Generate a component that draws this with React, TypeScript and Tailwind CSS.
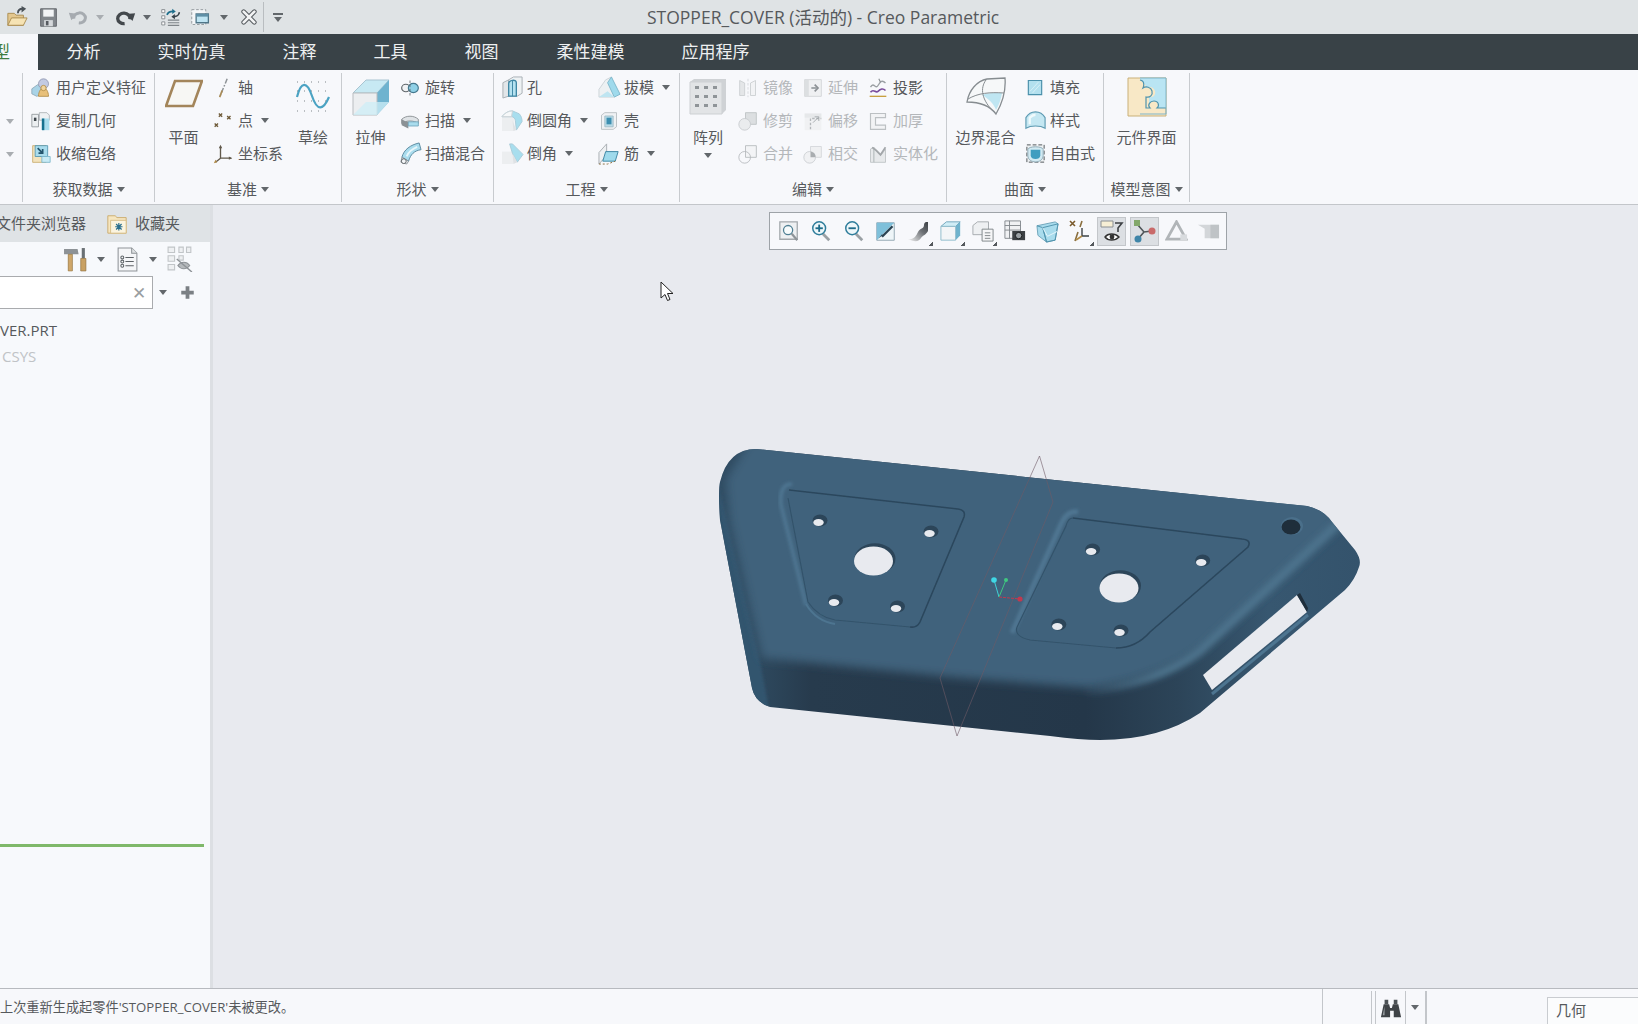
import React from "react";

type IconProps = { size?: number; children: React.ReactNode; box?: number };

function Ic({ size = 20, box = 24, children }: IconProps): React.JSX.Element {
  return (
    <svg viewBox={`0 0 ${box} ${box}`} width={size} height={size} className="shrink-0">
      {children}
    </svg>
  );
}

function Caret({ light = false }: { light?: boolean }): React.JSX.Element {
  return (
    <span
      className={
        light
          ? "inline-block w-0 h-0 border-x-[4px] border-x-transparent border-t-[5px] border-t-[#a9adb1]"
          : "inline-block w-0 h-0 border-x-[4px] border-x-transparent border-t-[5px] border-t-[#62676b]"
      }
    />
  );
}

/* ---------- quick access icons ---------- */
const OpenIcon = () => (
  <Ic size={22}>
    <path d="M2 8h7l2 2h8v11H2z" fill="#e3c78f" stroke="#a98b4f" />
    <path d="M2 21l4-8h17l-4 8z" fill="#f6e3b4" stroke="#a98b4f" />
    <path d="M13 8c0-3 2-5 5-5" fill="none" stroke="#4b5257" strokeWidth="2" />
    <path d="M17 0l5 3-5 4z" fill="#4b5257" />
  </Ic>
);
const SaveIcon = () => (
  <Ic size={21}>
    <path d="M3 2h18v20H3z" fill="#82878c" stroke="#5b6065" />
    <path d="M6 3h12v8H6z" fill="#f2f4f6" />
    <path d="M7 15h10v7H7z" fill="#d5d8db" />
    <path d="M9 16h3v5H9z" fill="#565b60" />
  </Ic>
);
const UndoIcon = () => (
  <Ic size={20}>
    <path d="M7 14a7 6 0 1 1 6 5" fill="none" stroke="#a6abb0" strokeWidth="3.6" />
    <path d="M1 7l10 1-7 8z" fill="#a6abb0" />
  </Ic>
);
const RedoIcon = () => (
  <Ic size={21}>
    <path d="M17 14a7 6 0 1 0-6 5" fill="none" stroke="#43484c" strokeWidth="3.8" />
    <path d="M23 7l-10 1 7 8z" fill="#43484c" />
  </Ic>
);
const RegenIcon = () => (
  <Ic size={21}>
    <path d="M2 3h3.500v3.500H2zM2 10h3.500v3.500H2zM2 17h3.500v3.500H2z" fill="#fff" stroke="#7f8589" />
    <path d="M9 15h13M9 18h13M9 21h13" stroke="#7f8589" strokeWidth="1.3" />
    <path d="M8 9c1-3 4-4 7-4" fill="none" stroke="#1f6f8c" strokeWidth="2" />
    <path d="M14 2l4 3-4 3z" fill="#1f6f8c" />
    <path d="M22 6c0 3-3 5-6 5" fill="none" stroke="#37424a" strokeWidth="2" />
    <path d="M17 8l-4 3 4 3z" fill="#37424a" />
  </Ic>
);
const WindowsIcon = () => (
  <Ic size={21}>
    <path d="M2 3h16v17H2z" fill="#f4f6f8" stroke="#8d9397" strokeDasharray="3 2" />
    <path d="M7 8h14v10H7z" fill="#bfe4f2" stroke="#4f7587" strokeWidth="1.5" />
    <path d="M7 8h14v3H7z" fill="#5f8fa6" />
  </Ic>
);
const CloseWinIcon = () => (
  <Ic size={16}>
    <path d="M4 4l16 16M20 4L4 20" stroke="#565b5f" strokeWidth="7" strokeLinecap="round" />
    <path d="M4 4l16 16M20 4L4 20" stroke="#f2f3f4" strokeWidth="4" strokeLinecap="round" />
  </Ic>
);

/* ---------- ribbon icons ---------- */
const UdfIcon = () => (
  <Ic>
    <path d="M1 13l7-5 5 3v8l-6 3-6-3z" fill="#a9d3e6" stroke="#8aa6b6" />
    <circle cx="15" cy="7" r="6" fill="#c2cae2" stroke="#9098b0" />
    <path d="M9 22c0-6 3-10 6-10s6 4 6 10z" fill="#e8c07a" stroke="#b08a45" />
    <circle cx="15" cy="12" r="3.200" fill="#f0d49c" stroke="#b08a45" />
  </Ic>
);
const CopyGeomIcon = () => (
  <Ic>
    <path d="M1 4h8v15H1z" fill="#eceff1" stroke="#8f9599" />
    <path d="M3.500 8h3v4h-3z" fill="#3f464c" />
    <path d="M10 2h9l3 3v6H10z" fill="#eef1f3" stroke="#a8aeb2" />
    <path d="M13 9h9v14h-9z" fill="#a9dced" />
    <path d="M13 9h3v14h-3z" fill="#17718f" />
  </Ic>
);
const ShrinkIcon = () => (
  <Ic>
    <path d="M2 2h16v20H2z" fill="#f3e3bd" stroke="#c9ab6c" />
    <path d="M5 2h15v13H5z" fill="#a9dced" stroke="#4f93ad" />
    <path d="M8 5l6 6M14 6v5H9" fill="none" stroke="#24556d" strokeWidth="2" />
    <path d="M13 15h10v7H13z" fill="#c8ebf5" stroke="#79b4ca" />
  </Ic>
);
const AxisIcon = () => (
  <Ic>
    <path d="M17 1l-9 22" stroke="#8d9296" strokeWidth="1.8" strokeDasharray="6 2 2 2" />
    <path d="M11 15l-3 8" stroke="#a88a55" strokeWidth="2" />
  </Ic>
);
const PointIcon = () => (
  <Ic>
    <path d="M7 3l4 4M11 3L7 7M17 6l4 4M21 6l-4 4M2 15l4 4M6 15l-4 4" stroke="#6e5a38" strokeWidth="1.6" />
  </Ic>
);
const CsysIcon = () => (
  <Ic>
    <path d="M9 3v14l13 0M9 17l-6 5" fill="none" stroke="#60584a" strokeWidth="1.6" />
    <path d="M9 1l-2 4h4zM23 17l-4-2v4z" fill="#60584a" />
    <path d="M1 23l4-1-2-3z" fill="#b08a45" />
  </Ic>
);
const HoleIcon = () => (
  <Ic size={23}>
    <path d="M2 7l6-3v17l-6 2z" fill="#e2e6e9" stroke="#a8b0b5" />
    <path d="M8 4l5-3h9v17l-5 3H8z" fill="#eef2f4" stroke="#a8b0b5" />
    <path d="M8 8c0-4 8-5 8-1v14H8z" fill="#b5e2f0" stroke="#3f87a4" strokeWidth="1.4" />
    <path d="M12 5v16" stroke="#3f87a4" />
  </Ic>
);
const RevolveIcon = () => (
  <Ic>
    <ellipse cx="7" cy="12" rx="5" ry="4.500" fill="#f0f2f4" stroke="#60666a" strokeWidth="1.4" />
    <ellipse cx="16" cy="12" rx="6" ry="5.500" fill="#8fd0e6" stroke="#45788e" strokeWidth="1.4" />
    <path d="M12 3v18" stroke="#60666a" strokeDasharray="3 2" />
  </Ic>
);
const SweepIcon = () => (
  <Ic>
    <path d="M2 10c5-5 15-5 20 0v5c-5-4-15-4-20 0z" fill="#dfe3e6" stroke="#7f8589" />
    <path d="M2 10c3 2 6 3 8 3v8l-8-4z" fill="#8b9195" />
    <path d="M10 13h12v5H10z" fill="#a9dced" stroke="#6fa4ba" />
  </Ic>
);
const SweepBlendIcon = () => (
  <Ic size={23}>
    <path d="M3 16C5 8 12 3 21 1l2 7c-7 1-11 5-13 12z" fill="#a9dced" stroke="#5b8aa0" />
    <path d="M3 16l7 4-2 3-6-2z" fill="#e8ebee" stroke="#8e989e" />
    <circle cx="5" cy="20" r="2.500" fill="#f4f6f8" stroke="#60666a" />
    <path d="M8 15c2-5 6-8 11-10" fill="none" stroke="#e8f6fa" strokeWidth="2" />
  </Ic>
);
const RoundIcon = () => (
  <Ic size={23}>
    <path d="M1 8h13v15H1z" fill="#eceef0" />
    <path d="M1 8c3-4 7-6 11-6l7 3c2 2 3 5 3 8l-6 9-1-10c0-2-2-4-4-4z" fill="#a8deee" stroke="#a9ccd9" />
    <path d="M12 2c-4 0-8 2-11 6h10z" fill="#f6f8f9" stroke="#ccd2d6" />
    <path d="M12 12l4 10-3 1z" fill="#dfe2e5" />
  </Ic>
);
const ChamferIcon = () => (
  <Ic size={23}>
    <path d="M1 10h12v13H1z" fill="#eceef0" />
    <path d="M1 10l8-8h3z" fill="#f6f8f9" />
    <path d="M9 2h3l11 11-6 8-5-9z" fill="#a8deee" stroke="#a9ccd9" />
    <path d="M12 12l5 9-4 2z" fill="#dfe2e5" />
  </Ic>
);
const DraftIcon = () => (
  <Ic size={23}>
    <path d="M1 22V14L8 4l6-3 3 12v9z" fill="#edf1f3" stroke="#cdd4d8" />
    <path d="M14 1l9 18-6 3-7-15z" fill="#9fdaec" stroke="#7fb8cc" />
    <path d="M1 22l9-6 7 6z" fill="#bfe5f1" />
  </Ic>
);
const ShellIcon = () => (
  <Ic>
    <path d="M3 5l4-3h14v17l-4 3H3z" fill="#f0f2f4" stroke="#b3b9bd" />
    <path d="M7 6h10v13H7z" fill="#b9dbe7" stroke="#9fb9c4" />
    <path d="M9 8h6v8H9z" fill="#3d8fb0" />
  </Ic>
);
const RibIcon = () => (
  <Ic size={23}>
    <path d="M1 23V11l8-9v12z" fill="#eef0f2" stroke="#a9afb3" />
    <path d="M5 20l3-10h13l-3 10z" fill="#9fdaec" stroke="#3f87a4" />
    <path d="M1 23h9l8-3" fill="none" stroke="#8a6f3f" strokeDasharray="2 2" />
  </Ic>
);
const MirrorIcon = () => (
  <Ic>
    <path d="M2 3l6 3v15H2z" fill="#e4e6e8" stroke="#c9cccf" />
    <path d="M12 1v22" stroke="#d2d5d8" strokeDasharray="3 2" />
    <path d="M21 3l-6 3v15h6z" fill="#f2f3f5" stroke="#c9cccf" />
  </Ic>
);
const ExtendIcon = () => (
  <Ic>
    <path d="M2 2h20v20H2z" fill="#eff0f2" stroke="#cfd2d5" />
    <path d="M2 2h5v20H2z" fill="#dcdfe1" />
    <path d="M10 12h6M14 8l4 4-4 4" fill="none" stroke="#8b9094" strokeWidth="2" />
  </Ic>
);
const ProjectIcon = () => (
  <Ic>
    <path d="M3 11c4-7 6 3 9-2s5-7 9-3" fill="none" stroke="#9a9fa3" strokeWidth="1.6" />
    <path d="M3 17c4-5 6 2 9-1s6-4 9-1" fill="none" stroke="#7a4d9c" strokeWidth="2" />
    <path d="M2 22h20" stroke="#c8a040" strokeWidth="1.6" />
    <path d="M13 1l2 4" stroke="#8a8f93" strokeWidth="1.4" />
  </Ic>
);
const TrimIcon = () => (
  <Ic>
    <path d="M9 2h13v14H9z" fill="#dcdfe1" stroke="#bcc0c3" />
    <circle cx="8" cy="16" r="7" fill="#eaecee" stroke="#c5c9cc" />
  </Ic>
);
const OffsetIcon = () => (
  <Ic>
    <path d="M2 3h20v20H2z" fill="#f0f1f3" />
    <path d="M2 3h20v5H2z" fill="#e6e8ea" />
    <path d="M9 22V9h13" fill="none" stroke="#b3b7ba" strokeDasharray="3 2" strokeWidth="1.6" />
    <path d="M12 14l6-6M14 7h5v5" fill="none" stroke="#9aa0a3" />
  </Ic>
);
const ThickenIcon = () => (
  <Ic>
    <path d="M3 3h18v5H9v9h12v5H3z" fill="#f2f3f5" stroke="#bcc0c3" strokeWidth="1.4" />
  </Ic>
);
const MergeIcon = () => (
  <Ic>
    <path d="M9 2h13v14H9z" fill="#f3f4f6" stroke="#b3b7ba" />
    <circle cx="8" cy="16" r="7" fill="none" stroke="#b3b7ba" />
  </Ic>
);
const IntersectIcon = () => (
  <Ic>
    <path d="M9 3h13v13H9z" fill="#eff0f2" stroke="#d2d5d8" />
    <circle cx="8" cy="16" r="7" fill="#f0f1f3" stroke="#c9ccd0" />
    <path d="M9 9a7 7 0 0 1 6 7H9z" fill="#a9adb0" />
  </Ic>
);
const SolidifyIcon = () => (
  <Ic>
    <path d="M3 6l4-2v18H3zM7 22h14V6l-5 7-9-9z" fill="#e7e9eb" stroke="#bcc0c3" />
    <path d="M5 4l5 4 5 5 6-9" fill="none" stroke="#a2a6a9" strokeWidth="2" />
  </Ic>
);
const FillIcon = () => (
  <Ic>
    <path d="M4 3h16v17H4z" fill="#b3e0ee" stroke="#4a90ab" strokeWidth="1.4" />
    <path d="M6 16L16 5M9 18L18 8" stroke="#dcf2f8" />
  </Ic>
);
const StyleIcon = () => (
  <Ic size={23}>
    <path d="M2 20V9c3-5 6-6 10-6s7 1 10 6v11c-5-3-15-3-20 0z" fill="#c4e7f2" stroke="#5d9ab2" strokeWidth="1.2" />
    <path d="M6 16V9c2-2 4-3 6-3" fill="none" stroke="#f0fafc" strokeWidth="2.4" />
  </Ic>
);
const FreeIcon = () => (
  <Ic size={23}>
    <path d="M3 3h18v18H3z" fill="#eef1f3" stroke="#4f5458" strokeDasharray="4 2" />
    <path d="M4 8c0-4 16-4 16 0v6c0 9-16 9-16 0z" fill="#d2eaf2" stroke="#8fa9b5" />
    <path d="M7 8h10v6c0 5-10 5-10 0z" fill="#3f9dc0" />
  </Ic>
);

const PlaneIcon = () => (
  <Ic size={38} box={38}>
    <path d="M10 3h27l-9 25H1z" fill="#f7f7f4" stroke="#a3855a" strokeWidth="2.6" />
  </Ic>
);
const SketchIcon = () => (
  <Ic size={36} box={36}>
    <path d="M2 18C6 2 12 2 17 17s11 15 17 1" fill="none" stroke="#4ba3c3" strokeWidth="2.2" />
    <path d="M2 3h32M2 12h32M2 22h32M2 32h32" stroke="#7f8589" strokeWidth="1" strokeDasharray="1 6" />
  </Ic>
);
const ExtrudeIcon = () => (
  <Ic size={38} box={38}>
    <path d="M1 15L14 2h23L25 15z" fill="#c7e9f3" stroke="#a8c4d1" />
    <path d="M25 15L37 2v22L25 37z" fill="#6fb3cf" />
    <path d="M1 15h24v22H1z" fill="#eceef0" stroke="#b8bcbf" />
    <path d="M25 37l12-13H14l-13 13z" fill="#cdeef7" opacity=".75" />
  </Ic>
);
const PatternIcon = () => (
  <Ic size={38} box={38}>
    <path d="M1 4h32v32H1z" fill="#e2e4e6" stroke="#cdd0d3" />
    <path d="M33 4l4-3v31l-4 4zM1 4l4-3h32l-4 3z" fill="#cfd2d5" />
    {[9, 18, 27].map((y) =>
      [8, 17, 26].map((x) => <rect key={`${x}-${y}`} x={x - 2} y={y - 1} width="4" height="3" fill="#8f9498" />)
    )}
  </Ic>
);
const BoundaryIcon = () => (
  <Ic size={42} box={42}>
    <path d="M2 26C4 14 12 5 22 3l18-1c1 12-2 24-9 36-6-8-16-12-29-12z" fill="#f6f8f9" stroke="#868c90" strokeWidth="1.3" />
    <path d="M17 19c5-2 11-2 20-2-1 6-3 12-6 17-2-6-7-11-14-15z" fill="#bfe6f2" />
    <path d="M3 23c10-6 22-7 36-6M21 4c-6 8-5 20 9 33" fill="none" stroke="#868c90" />
  </Ic>
);
const InterfaceIcon = () => (
  <Ic size={40} box={40}>
    <path d="M1 1h38v38H1z" fill="#f8e8c6" stroke="#c9b078" />
    <path d="M13 1h26v30h-9c3-3 1-7-3-7s-7 4-4 7h-1V20c4 1 7-2 6-6s-6-5-9-3c1-4-6-6-6-10z" fill="#b9e5f3" />
    <path d="M13 3c6 1 3 8 3 8 3-2 8-1 9 3s-2 7-6 6v11h4c-3-3 0-7 4-7s6 4 3 7h9" fill="none" stroke="#4f93ad" strokeWidth="1.2" />
    <path d="M13 1h26v36H13" fill="none" stroke="#7fb5c9" />
  </Ic>
);

/* ---------- graphics toolbar icons ---------- */
const Lens = ({ sign }: { sign?: "+" | "-" }) => (
  <Ic size={22}>
    <path d="M14 15l7 7" stroke="#9aa0a4" strokeWidth="3" />
    <circle cx="10" cy="9" r="7" fill="#eef7fa" stroke="#2f7d9b" strokeWidth="1.6" />
    {sign && <path d="M6 9h8" stroke="#1f6c8a" strokeWidth="2" />}
    {sign === "+" && <path d="M10 5v8" stroke="#1f6c8a" strokeWidth="2" />}
  </Ic>
);
const RefitIcon = () => (
  <Ic size={22}>
    <path d="M2 2h19v19H2z" fill="#eef0f2" stroke="#a3a8ac" strokeWidth="1.4" />
    <circle cx="11" cy="11" r="5" fill="#f7fbfc" stroke="#4f7f93" strokeWidth="1.4" />
    <path d="M15 15l6 7" stroke="#8e9498" strokeWidth="2.4" />
  </Ic>
);
const RepaintIcon = () => (
  <Ic size={21}>
    <path d="M2 2h20v20H2z" fill="#eef5f8" stroke="#8aa1ad" />
    <path d="M2 2h20L2 22z" fill="#7fc0da" />
    <path d="M20 6L8 18" stroke="#2a4352" strokeWidth="2.6" />
    <path d="M4 20l5-4-1-1z" fill="#2a4352" />
  </Ic>
);
const Corner = () => <span className="absolute right-0 bottom-0 w-[5px] h-[5px] bg-[linear-gradient(135deg,transparent_50%,#55595d_50%)]" />;
const ShadeIcon = () => (
  <Ic size={24}>
    <defs>
      <linearGradient id="shade" x1="0" y1="1" x2="1" y2="0">
        <stop offset="0" stopColor="#f4f4f4" />
        <stop offset=".6" stopColor="#6d7175" />
        <stop offset="1" stopColor="#3d4145" />
      </linearGradient>
    </defs>
    <path d="M2 20c6 1 8-3 10-7s6-3 6-7 4-3 4-3v9c-2 4-5 4-7 7s-5 5-13 1z" fill="url(#shade)" />
  </Ic>
);
const ViewIcon = () => (
  <Ic size={22}>
    <path d="M1 7l6-5h15l-5 5z" fill="#d0edf6" stroke="#6fa4ba" />
    <path d="M17 7l5-5v15l-5 5z" fill="#6fb3cd" />
    <path d="M1 7h16v15H1z" fill="#f3f5f7" stroke="#8cbacb" />
  </Ic>
);
const SavedViewIcon = () => (
  <Ic size={22}>
    <path d="M1 6l5-4h12v14H1z" fill="#eef0f2" stroke="#a3a8ac" />
    <path d="M11 10h12v13H11z" fill="#f5f6f7" stroke="#7c8286" />
    <path d="M14 14h6M14 17h6M14 20h6" stroke="#7c8286" />
  </Ic>
);
const SnapshotIcon = () => (
  <Ic size={22}>
    <path d="M1 1h17v19H1z" fill="#f0f1f3" stroke="#81878b" />
    <path d="M1 6h17M1 11h17M6 1v19" stroke="#81878b" />
    <path d="M9 12h14v10H9z" fill="#3c4044" />
    <circle cx="16" cy="17" r="3.500" fill="#9aa0a4" stroke="#15181a" />
  </Ic>
);
const PerspectiveIcon = () => (
  <Ic size={23}>
    <path d="M1 6l19-4 3 2-3 17-9 2-9-7z" fill="#a9dced" stroke="#6fa4ba" />
    <path d="M7 8l16-4-3 17-9 2zM1 6l6 2 4 15" fill="none" stroke="#4f93ad" />
    <path d="M7 8l5 9 10-5" fill="none" stroke="#e6f6fb" />
  </Ic>
);
const DatumIcon = () => (
  <Ic size={24}>
    <path d="M2 2l5 5M7 2L2 7" stroke="#7a5a2c" strokeWidth="1.6" />
    <path d="M14 2l-2 6M10 13l-3 9" stroke="#8a6f3f" strokeWidth="1.6" />
    <path d="M14 9v8h7" fill="none" stroke="#3d4347" strokeWidth="1.4" />
    <path d="M14 17l-6 4" stroke="#b08a45" strokeWidth="1.6" />
  </Ic>
);
const SelectionIcon = () => (
  <Ic size={24}>
    <path d="M1 2h12v6H1z" fill="#f7efd5" stroke="#8a8f93" />
    <path d="M15 4h7l-4 5v4" fill="none" stroke="#3c4044" strokeWidth="1.6" />
    <path d="M5 18c3-4 10-4 14 0-4 4-11 4-14 0z" fill="#fff" stroke="#333" strokeWidth="1.4" />
    <circle cx="12" cy="18" r="2.400" fill="#333" />
  </Ic>
);
const NodeIcon = () => (
  <Ic size={24}>
    <path d="M5 5l7 8 8-1M12 13l-6 7" fill="none" stroke="#4f5559" strokeWidth="1.6" />
    <rect x="2" y="1" width="6" height="6" fill="#83a86a" />
    <circle cx="20" cy="12" r="3.500" fill="#c96a6a" />
    <circle cx="6" cy="20" r="3.500" fill="#3f85a8" />
  </Ic>
);
const TriangleIcon = () => (
  <Ic size={23}>
    <path d="M12 2l10 18H2z" fill="none" stroke="#b1b5b8" strokeWidth="3" />
    <path d="M16 15h7v6h-7z" fill="#d8dbde" />
  </Ic>
);
const FadedIcon = () => (
  <Ic size={23}>
    <path d="M1 5h22v14H8V9z" fill="#d3d6d9" />
    <path d="M14 5h9v14h-9z" fill="#bfc3c6" />
  </Ic>
);

/* ---------- sidebar / status icons ---------- */
const FavFolderIcon = () => (
  <Ic size={22}>
    <path d="M2 3h8l2 2h10v17H2z" fill="#f6e6bf" stroke="#c9ab6c" />
    <path d="M5 8h17v14H5z" fill="#fbf4df" stroke="#d5bd88" />
    <path d="M14 11v8M10 15h8M11 12l6 6M17 12l-6 6" stroke="#2a6f8f" strokeWidth="1.3" />
  </Ic>
);
const ToolsIcon = () => (
  <Ic size={25}>
    <path d="M1 2h13l1 5H9v16H5V7H1z" fill="#8d9296" />
    <path d="M5 7h4v16H5z" fill="#cfa76a" stroke="#a07f48" strokeWidth=".6" />
    <path d="M18 1h3v10h-3z" fill="#6a7074" />
    <path d="M17 11h5v12h-5z" fill="#c9a163" stroke="#8a6c3a" strokeWidth=".6" />
  </Ic>
);
const ListIcon = () => (
  <Ic size={25}>
    <path d="M3 1h13l5 5v17H3z" fill="#f5f6f8" stroke="#8f9498" />
    <path d="M16 1v5h5" fill="#dfe2e4" stroke="#8f9498" />
    <circle cx="7" cy="10" r="1.400" fill="none" stroke="#5d6266" />
    <circle cx="7" cy="14" r="1.400" fill="none" stroke="#5d6266" />
    <circle cx="7" cy="18" r="1.400" fill="none" stroke="#5d6266" />
    <path d="M10 10h8M10 14h8M10 18h8" stroke="#5d6266" />
  </Ic>
);
const TreeHideIcon = () => (
  <Ic size={26}>
    <path d="M1 1h6v5H1zM1 9h6v5H1zM1 17h6v5H1zM11 1h4v5h-4zM18 1h4v5h-4zM11 9h4v4h-4z" fill="#eef0f2" stroke="#c1c5c8" />
    <path d="M10 18c3-4 8-4 11 0-3 4-8 4-11 0z" fill="#b5b9bc" stroke="#8d9296" />
    <path d="M9 12l14 12" stroke="#8d9296" strokeWidth="1.3" />
  </Ic>
);
const BinocularsIcon = () => (
  <Ic size={22}>
    <path d="M5 3h4v5H5zM15 3h4v5h-4z" fill="#4d5256" />
    <path d="M4 8h6l1 4h2l1-4h6l3 14h-8v-7h-4v7H1z" fill="#3f4347" />
    <path d="M5 10l-2 10h2z" fill="#9a9fa3" />
  </Ic>
);
const PlusIcon = () => (
  <Ic size={15}>
    <path d="M12 2v20M2 12h20" stroke="#7b8084" strokeWidth="6" />
  </Ic>
);

const ModelIcon = () => (
  <svg viewBox="0 0 680 320" className="w-[680px] h-[320px]">
    <defs>
      <linearGradient id="side" gradientUnits="userSpaceOnUse" x1="50" y1="0" x2="660" y2="0">
        <stop offset="0" stopColor="#2f4b61" />
        <stop offset=".1" stopColor="#273b4d" />
        <stop offset=".55" stopColor="#243749" />
        <stop offset=".7" stopColor="#2c4458" />
        <stop offset=".85" stopColor="#375770" />
        <stop offset="1" stopColor="#34536c" />
      </linearGradient>
      <linearGradient id="rim" gradientUnits="userSpaceOnUse" x1="380" y1="0" x2="640" y2="0">
        <stop offset="0" stopColor="#527a94" stopOpacity="0" />
        <stop offset=".3" stopColor="#527a94" stopOpacity=".9" />
        <stop offset="1" stopColor="#4d748e" />
      </linearGradient>
      <filter id="blur4" x="-20%" y="-20%" width="140%" height="140%"><feGaussianBlur stdDeviation="5" /></filter>
      <filter id="blur3" x="-20%" y="-40%" width="140%" height="180%"><feGaussianBlur stdDeviation="3" /></filter>
      <filter id="blur2"><feGaussianBlur stdDeviation="1.8" /></filter>
      <filter id="blur1"><feGaussianBlur stdDeviation=".7" /></filter>
      <clipPath id="body">
        <path d="M56 19L607 76Q624 80 632 92L655 120Q662 130 659 137Q655 150 645 160L500 283Q460 310 400 310Q380 310 350 306L70 277Q55 272 52 258L20 90Q18 60 20 52Q28 19 56 19z" />
      </clipPath>
    </defs>
    <g clipPath="url(#body)">
      <rect width="680" height="320" fill="url(#side)" />
      <path d="M15 40L60 232 70 285 40 285z" fill="#33556e" filter="url(#blur2)" />
      <path
        d="M50 10L620 66 640 96 503 218Q455 250 390 258L260 248 62 228 30 90 26 50z"
        fill="#3f627c"
        filter="url(#blur4)"
      />
      <path d="M640 92L499 222Q455 254 385 262" fill="none" stroke="url(#rim)" strokeWidth="8" filter="url(#blur3)" />
    </g>

    {/* left pocket */}
    <path d="M106 175L81 75Q79 54 92 54" fill="none" stroke="#4d7490" strokeWidth="4" filter="url(#blur2)" />
    <path d="M135 194Q116 191 106 174" fill="none" stroke="#4d7490" strokeWidth="2" filter="url(#blur1)" />
    <path
      d="M89 60L258 79Q266 80 264 87L220 192Q217 198 210 197"
      fill="none"
      stroke="#2b475d"
      strokeWidth="1.6"
      filter="url(#blur1)"
    />
    <path d="M210 197L135 190Q118 187 108 172L88 68" fill="none" stroke="#33536b" strokeWidth="1.2" filter="url(#blur1)" />
    {/* right pocket */}
    <path d="M312 203L362 92Q368 80 378 82" fill="none" stroke="#4f7692" strokeWidth="5" filter="url(#blur2)" />
    <path
      d="M373 88L542 109Q552 110 548 117L450 202Q436 218 416 218"
      fill="none"
      stroke="#2b475d"
      strokeWidth="1.6"
      filter="url(#blur1)"
    />
    <path d="M416 218L330 210Q312 206 318 195L366 96Q368 88 373 88" fill="none" stroke="#33536b" strokeWidth="1.2" filter="url(#blur1)" />

    {/* holes */}
    {[
      [119, 92],
      [230, 103],
      [134.5, 172],
      [196.5, 178],
      [391.6, 121],
      [501.7, 132],
      [357.8, 196],
      [420, 202],
    ].map(([x, y]) => (
      <g key={`${x}`}>
        <ellipse cx={x + 1} cy={y - 1.5} rx="7.5" ry="6" fill="#2c4559" />
        <ellipse cx={x - 0.5} cy={y + 0.5} rx="5.200" ry="3.400" fill="#e8eaef" />
      </g>
    ))}
    {[
      [173.5, 131],
      [419, 158],
    ].map(([x, y]) => (
      <g key={`${x}`}>
        <ellipse cx={x + 1.5} cy={y - 2.2} rx="20.5" ry="15.5" fill="#2c4559" />
        <ellipse cx={x} cy={y} rx="19.5" ry="14.5" fill="#e8eaef" />
      </g>
    ))}
    <ellipse cx="592" cy="96" rx="11" ry="9" fill="#4a6f8a" />
    <ellipse cx="591" cy="97" rx="9.500" ry="7.500" fill="#1f2e3b" />

    {/* side slot */}
    <path d="M503 245L597 165 607 182 512 260z" fill="#e8eaef" />
    <path d="M597 165L600 163 608 178 607 182z" fill="#1f2e3b" />
    <path d="M512 264L608 185" stroke="#4d7490" strokeWidth="3" filter="url(#blur1)" />

    {/* datum plane */}
    <path d="M339.5 26L353 72 257 306 240 248z" fill="none" stroke="#6f5a66" strokeWidth=".8" opacity=".75" />

    {/* csys */}
    <path d="M299 167L294 150" stroke="#3fd0d8" strokeWidth="1" />
    <path d="M299 167L306 150" stroke="#3fc880" strokeWidth="1" />
    <path d="M299 167L320 169" stroke="#c0394f" strokeWidth="1" strokeDasharray="3 1" />
    <circle cx="294" cy="150" r="2.800" fill="#3fd8e6" />
    <circle cx="306" cy="150" r="2" fill="#3fc880" />
    <circle cx="320" cy="169" r="2.600" fill="#c0394f" />
  </svg>
);

/* ---------- ribbon pieces ---------- */
type RowProps = { icon: React.ReactNode; label: string; caret?: boolean; off?: boolean };

function Row({ icon, label, caret, off }: RowProps): React.JSX.Element {
  return (
    <div className={off ? "h-[33px] flex items-center text-[#b4b7ba]" : "h-[33px] flex items-center"}>
      <span className="w-[20px] flex justify-center">{icon}</span>
      <span className="ml-[5px] whitespace-nowrap">{label}</span>
      {caret && (
        <span className="ml-[8px] flex">
          <Caret />
        </span>
      )}
    </div>
  );
}

function Big({ icon, label, width, caret }: { icon: React.ReactNode; label: string; width: string; caret?: boolean }): React.JSX.Element {
  return (
    <div className={`${width} shrink-0 flex flex-col items-center pt-[6px]`}>
      <div className="h-[38px] flex items-center justify-center">{icon}</div>
      <div className="mt-[11px] leading-[20px] whitespace-nowrap">{label}</div>
      {caret && (
        <div className="mt-[6px] flex">
          <Caret />
        </div>
      )}
    </div>
  );
}

function Group({ label, width, children }: { label: string; width: string; children: React.ReactNode }): React.JSX.Element {
  return (
    <div className={`${width} shrink-0 flex flex-col`}>
      <div className="flex-1 flex flex-col border-r border-[#c8cbcf] mt-[3px] mb-[2px]">
        <div className="h-[104px] flex -mt-[1px]">{children}</div>
        <div className="flex-1 flex items-center justify-center gap-[4px] pt-[1px]">
          <span>{label}</span>
          <Caret />
        </div>
      </div>
    </div>
  );
}

const tabs = ["分析", "实时仿真", "注释", "工具", "视图", "柔性建模", "应用程序"];
const toolbar: { icon: React.ReactNode; corner?: boolean; on?: boolean }[] = [
  { icon: <RefitIcon /> },
  { icon: <Lens sign="+" /> },
  { icon: <Lens sign="-" /> },
  { icon: <RepaintIcon /> },
  { icon: <ShadeIcon />, corner: true },
  { icon: <ViewIcon />, corner: true },
  { icon: <SavedViewIcon />, corner: true },
  { icon: <SnapshotIcon /> },
  { icon: <PerspectiveIcon /> },
  { icon: <DatumIcon />, corner: true },
  { icon: <SelectionIcon />, on: true },
  { icon: <NodeIcon />, on: true },
  { icon: <TriangleIcon /> },
  { icon: <FadedIcon /> },
];

export default function App(): React.JSX.Element {
  return (
    <div className="w-full h-screen overflow-hidden flex flex-col bg-[#e8eaef] text-[15px] text-[#56595c] font-['Open_Sans','Noto_Sans_CJK_SC',sans-serif]">
      {/* Title bar */}
      <div className="h-[34px] shrink-0 flex items-center bg-[#dfe3e5]">
        <div className="w-[290px] shrink-0 flex items-center pl-[6px]">
          <OpenIcon />
          <span className="ml-[9.5px] flex"><SaveIcon /></span>
          <span className="ml-[9px] flex"><UndoIcon /></span>
          <span className="ml-[8.5px] flex"><Caret light /></span>
          <span className="ml-[10.5px] flex"><RedoIcon /></span>
          <span className="ml-[7.5px] flex"><Caret /></span>
          <span className="ml-[9px] flex"><RegenIcon /></span>
          <span className="ml-[9px] flex"><WindowsIcon /></span>
          <span className="ml-[9px] flex"><Caret /></span>
          <span className="ml-[13px] flex"><CloseWinIcon /></span>
          <span className="ml-[6px] w-px h-[30px] bg-[#b9bdc0]" />
          <span className="ml-[9px] flex flex-col items-center gap-[2px]">
            <span className="w-[10px] h-[2px] bg-[#62676b]" />
            <Caret />
          </span>
        </div>
        <div className="pl-[357px] text-[17.5px] whitespace-nowrap">STOPPER_COVER (活动的) - Creo Parametric</div>
      </div>

      {/* Tabs */}
      <div className="h-[36px] shrink-0 flex items-center bg-[#394247] text-[17px] text-[#eef0f1]">
        <div className="w-[38px] h-full bg-[#f7f8fb] text-[#3f7d3f] flex items-center justify-start -indent-[7px] overflow-hidden">
          型
        </div>
        {tabs.map((t, i) => (
          <div key={t} className={i === 5 ? "pl-[29.5px] pr-[28.5px]" : "px-[28.5px]"}>
            {t}
          </div>
        ))}
      </div>

      {/* Ribbon */}
      <div className="h-[135px] shrink-0 flex bg-[#f7f8fb] border-b border-[#c3c6ca]">
        <div className="w-[23px] shrink-0 flex flex-col mt-[3px] mb-[2px] border-r border-[#c8cbcf]">
          <div className="h-[33px] -mt-[1px]" />
          <div className="h-[33px] flex items-center pl-[6px]"><Caret light /></div>
          <div className="h-[33px] flex items-center pl-[6px]"><Caret light /></div>
        </div>
        <Group label="获取数据" width="w-[132px]">
          <div className="pl-[8px] -mt-[1px]">
            <Row icon={<UdfIcon />} label="用户定义特征" />
            <Row icon={<CopyGeomIcon />} label="复制几何" />
            <Row icon={<ShrinkIcon />} label="收缩包络" />
          </div>
        </Group>
        <Group label="基准" width="w-[187px]">
          <Big icon={<PlaneIcon />} label="平面" width="w-[57px]" />
          <div className="w-[84px] pl-[1px] -mt-[1px]">
            <Row icon={<AxisIcon />} label="轴" />
            <Row icon={<PointIcon />} label="点" caret />
            <Row icon={<CsysIcon />} label="坐标系" />
          </div>
          <Big icon={<SketchIcon />} label="草绘" width="w-[34px]" />
        </Group>
        <Group label="形状" width="w-[152px]">
          <Big icon={<ExtrudeIcon />} label="拉伸" width="w-[57px]" />
          <div className="pl-[1px] -mt-[1px]">
            <Row icon={<RevolveIcon />} label="旋转" />
            <Row icon={<SweepIcon />} label="扫描" caret />
            <Row icon={<SweepBlendIcon />} label="扫描混合" />
          </div>
        </Group>
        <Group label="工程" width="w-[186px]">
          <div className="w-[105px] pl-[8px] -mt-[1px]">
            <Row icon={<HoleIcon />} label="孔" />
            <Row icon={<RoundIcon />} label="倒圆角" caret />
            <Row icon={<ChamferIcon />} label="倒角" caret />
          </div>
          <div className="-mt-[1px]">
            <Row icon={<DraftIcon />} label="拔模" caret />
            <Row icon={<ShellIcon />} label="壳" />
            <Row icon={<RibIcon />} label="筋" caret />
          </div>
        </Group>
        <Group label="编辑" width="w-[267px]">
          <Big icon={<PatternIcon />} label="阵列" width="w-[56px]" caret />
          <div className="w-[67px] pl-[2px] -mt-[1px]">
            <Row icon={<MirrorIcon />} label="镜像" off />
            <Row icon={<TrimIcon />} label="修剪" off />
            <Row icon={<MergeIcon />} label="合并" off />
          </div>
          <div className="w-[65px] -mt-[1px]">
            <Row icon={<ExtendIcon />} label="延伸" off />
            <Row icon={<OffsetIcon />} label="偏移" off />
            <Row icon={<IntersectIcon />} label="相交" off />
          </div>
          <div className="-mt-[1px]">
            <Row icon={<ProjectIcon />} label="投影" />
            <Row icon={<ThickenIcon />} label="加厚" off />
            <Row icon={<SolidifyIcon />} label="实体化" off />
          </div>
        </Group>
        <Group label="曲面" width="w-[157px]">
          <Big icon={<BoundaryIcon />} label="边界混合" width="w-[77px]" />
          <div className="pl-[1px] -mt-[1px]">
            <Row icon={<FillIcon />} label="填充" />
            <Row icon={<StyleIcon />} label="样式" />
            <Row icon={<FreeIcon />} label="自由式" />
          </div>
        </Group>
        <Group label="模型意图" width="w-[86px]">
          <Big icon={<InterfaceIcon />} label="元件界面" width="w-[85px]" />
        </Group>
      </div>

      {/* Main */}
      <div className="flex-1 min-h-0 flex">
        {/* Left panel */}
        <div className="w-[213px] shrink-0 flex flex-col bg-[#f7f9fc] border-r-[3px] border-[#dcdfe3] overflow-hidden">
          <div className="h-[37px] shrink-0 flex items-center bg-[#dfe3e6] whitespace-nowrap">
            <span className="-ml-[4px]">文件夹浏览器</span>
            <span className="ml-[20px] flex"><FavFolderIcon /></span>
            <span className="ml-[7px]">收藏夹</span>
          </div>
          <div className="h-[34px] shrink-0 flex items-center pl-[63px]">
            <ToolsIcon />
            <span className="ml-[9px] flex"><Caret /></span>
            <span className="ml-[10px] flex"><ListIcon /></span>
            <span className="ml-[9px] flex"><Caret /></span>
            <span className="ml-[10px] flex"><TreeHideIcon /></span>
          </div>
          <div className="h-[33px] shrink-0 flex items-center">
            <div className="w-[153px] h-full bg-white border border-l-0 border-[#a9abae] flex items-center justify-end pr-[6px]">
              <span className="text-[#9a9ea1] text-[17px] leading-none">✕</span>
            </div>
            <span className="ml-[6px] flex"><Caret /></span>
            <span className="ml-[13px] flex"><PlusIcon /></span>
          </div>
          <div className="h-[26px] mt-[8px] shrink-0 flex items-center">VER.PRT</div>
          <div className="h-[26px] shrink-0 flex items-center text-[#c0c3c6] pl-[2px]">CSYS</div>
          <div className="mt-[475px] h-[3px] w-[204px] shrink-0 bg-[#7fb86a]" />
        </div>

        {/* Graphics window */}
        <div className="relative flex-1 min-w-0">
          <div className="absolute left-[556px] top-[7px] h-[38px] flex items-center pl-[3px] pr-[1px] bg-[#f7f8fb] border border-[#9ea3a8]">
            {toolbar.map((b, i) => (
              <div
                key={i}
                className={
                  b.on
                    ? "relative w-[29px] h-[29px] mx-[1.65px] flex items-center justify-center bg-[#dcdfe3] border border-[#c3c6ca]"
                    : "relative w-[29px] h-[29px] mx-[1.65px] flex items-center justify-center"
                }
              >
                {b.icon}
                {b.corner && <Corner />}
              </div>
            ))}
          </div>
          <div className="absolute left-[487px] top-[225px]">
            <ModelIcon />
          </div>
          <svg viewBox="0 0 14 21" className="absolute left-[447px] top-[76px] w-[14px] h-[21px]">
            <path d="M1 1v16l4-3.500 2.500 6 2.500-1-2.500-6h5.500z" fill="#fff" stroke="#222" strokeWidth="1" />
          </svg>
        </div>
      </div>

      {/* Status bar */}
      <div className="h-[36px] shrink-0 flex items-center bg-[#f7f8fb] border-t border-[#b7babf]">
        <div className="w-[1322px] shrink-0 h-full flex items-center pt-[3px] whitespace-nowrap text-[13.2px]">上次重新生成起零件'STOPPER_COVER'未被更改。</div>
        <div className="w-[49px] h-full shrink-0 border-l border-[#c3c6ca]" />
        <div className="w-[56px] h-[34px] mt-[2px] shrink-0 flex items-center border-x border-[#c3c6ca] pl-[3px]">
          <div className="h-full flex-1 flex border-x border-[#c3c6ca]">
            <div className="flex-1 flex items-center justify-center border-r border-[#c3c6ca]"><BinocularsIcon /></div>
            <div className="w-[19px] flex items-center justify-center pr-[2px]"><Caret /></div>
          </div>
        </div>
        <div className="ml-[120px] flex-1 h-[28px] mt-[8px] flex items-center pl-[8px] bg-[#fbfcfd] border border-r-0 border-[#c9ccd0]">几何</div>
      </div>
    </div>
  );
}
